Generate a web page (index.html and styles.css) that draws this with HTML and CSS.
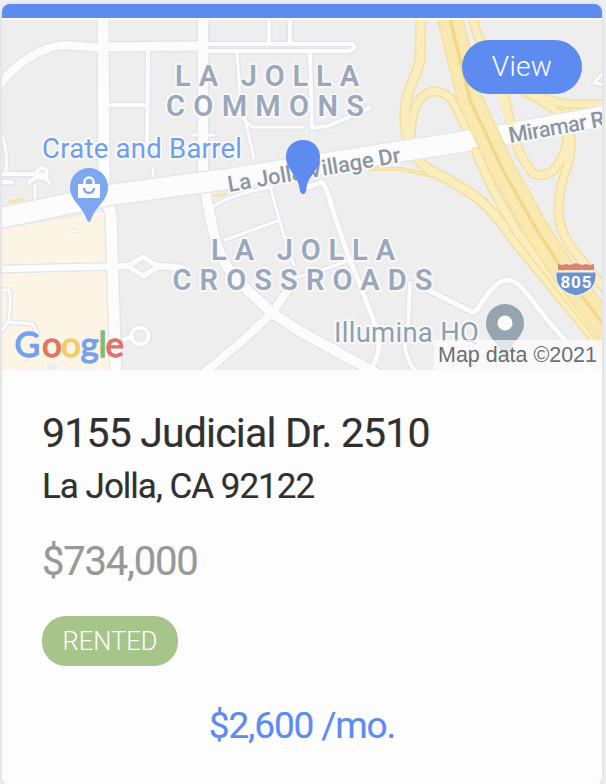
FILE: index.html
```html
<!DOCTYPE html>
<html lang="en">
<head>
<meta charset="utf-8">
<title>9155 Judicial Dr. 2510</title>
<link rel="stylesheet" href="styles.css">
</head>
<body>
<article class="card">
  <div class="map">
    <svg class="map-image" viewBox="2 20 600 350">
      <defs>
        <g id="streets">
          <path class="road w8" d="M0 84C14 66 40 46 65 45L102 48"/>
          <path class="road w9" d="M102 47L200 46"/>
          <path class="road w4" d="M200 44L353 44M200 51L350 51L355 47"/>
          <path class="road w11" d="M103 10L104 190L111 215L116 380"/>
          <path class="road w10" d="M203 10L203 180L214 235Q220 262 240 283L272 313L303 333L385 378"/>
          <path class="road w8" d="M200 376L240 343L272 313L288 290"/>
          <path class="road w4" d="M148 52L147 150M108 105L146 105M269 10V42M290 10V42"/>
          <path class="road w3" d="M237 52L240 96L247 128L254 158M243 118L252 127L303 127M153 168V188"/>
          <path class="road w4" d="M310 52L312 128L328 126L370 108"/>
          <path class="road w3" d="M192 135H214M213 207Q228 195 272 187M271 190L285 240L294 265M225 240L277 221M294 278L322 270L350 260"/>
          <path class="road w5" d="M305 188L322 182Q328 190 332 208L348 255L362 290L378 332Q382 348 373 366"/>
          <path class="road w4" d="M410 283L408 325L405 343Q404 357 417 373"/>
          <path class="road w5" d="M428 290L472 312Q476 313 480 305C490 290 498 280 508 280C520 281 530 298 545 317L592 372"/>
          <path class="road w7" d="M0 269L128 266M158 266L182 268"/>
          <path class="road w5" d="M128 266L143 257L158 267L143 276ZM125 339L131 337"/>
          <circle class="road w4" cx="140" cy="336" r="8.500"/>
          <path class="road w4" d="M0 174H35M0 182H12M29 182L42 174L49 182"/>
          <circle class="road w4" cx="42" cy="173" r="5"/>
          <path class="road w3" d="M2 135Q8 150 6 170M2 290H9Q12 302 8 322L33 324L38 335M35 185V200M8 322L2 330"/>
          <path class="road w3" d="M604 72L594 83L604 85"/>
        </g>
        <g id="arterial">
          <path class="road w20" d="M0 218L110 195L220 180L300 167L480 139L604 116"/>
        </g>
        <g id="ramps">
          <path class="road w9" d="M421 10L420 60Q418 70 410 88Q404 104 405 118Q406 145 418 159Q424 168 437 174Q462 186 480 200Q496 214 516 243L590 333L610 358"/>
          <path class="road w2" d="M370 169L400 169L435 176"/>
          <path class="road w8" d="M411 145Q410 111 420 99Q434 84 450 98Q460 111 468 135"/>
          <path class="road w8" d="M472 10Q474 35 486 48L500 76L512 130Q518 155 532 172Q540 179 553 171Q564 158 567 143Q568 115 545 103L522 90"/>
          <path class="road w8" d="M515 82Q545 103 570 104L608 104"/>
          <path class="road w8" d="M566 112Q576 145 565 173Q557 195 559 218Q562 239 580 258L608 293"/>
        </g>
        <g id="collector">
          <path class="road w8" d="M476 152L492 188L517 232L606 346"/>
        </g>
        <g id="freeway">
          <path class="road w24" d="M448 10L470 100L503 170L535 227L564 272L612 336"/>
        </g>
      </defs>

      <g class="terrain">
        <rect class="land" x="2" y="20" width="600" height="350"/>
        <path class="district" d="M2 229L104 212L111 370H2Z"/>
        <use href="#streets" class="street-edge"/>
        <use href="#streets" class="street"/>
        <path class="land" d="M47 363h10v7H47z"/>
        <ellipse class="pond" cx="74" cy="231" rx="4" ry="2"/>
        <use href="#ramps" class="highway-edge"/>
        <use href="#ramps" class="highway"/>
        <use href="#arterial" class="street-edge"/>
        <use href="#arterial" class="street"/>
        <path class="highway road w8 crossing" d="M496 75L512 130Q518 155 532 172"/>
        <path class="accent" d="M214 196L227 194M9 202L24 199"/>
        <use href="#collector" class="highway-edge"/>
        <use href="#collector" class="highway"/>
        <use href="#freeway" class="highway-edge"/>
        <use href="#freeway" class="freeway"/>
        <path class="median" d="M448 10L470 100L503 170L535 227L564 272L612 336"/>
      </g>

      <g class="area">
        <text x="175" y="86" textLength="184">LA JOLLA</text>
        <text x="166" y="116" textLength="198">COMMONS</text>
        <text x="211" y="260" textLength="184">LA JOLLA</text>
        <text x="172.500" y="290" textLength="260">CROSSROADS</text>
      </g>
      <text class="place shop" x="42" y="158" textLength="200">Crate and Barrel</text>
      <text class="place office" x="334" y="342" textLength="145">Illumina HQ</text>
      <g class="street-name">
        <text transform="translate(229 192) rotate(-9.800)" textLength="175">La Jolla Village Dr</text>
        <text transform="translate(510 143) rotate(-10)" textLength="109">Miramar Rd</text>
      </g>

      <path class="pin-shop" d="M89 168a19 19 0 0 1 19 19c0 14-12 18-17 33q-2 4-4 0c-5-15-17-19-17-33a19 19 0 0 1 19-19Z"/>
      <path class="bag" d="M78 184h22v14H78Z"/>
      <path class="handle" d="M84.500 186v-4a4.500 4.500 0 0 1 9 0v4"/>
      <path class="smile" d="M84 188a5 5 0 0 0 10 0"/>
      <path class="pin-office" d="M505 304a19 19 0 0 1 19 19c0 14-12 18-17 33q-2 4-4 0c-5-15-17-19-17-33a19 19 0 0 1 19-19Z"/>
      <circle class="pin-hole" cx="505" cy="323" r="7.500"/>

      <path class="shield-top" d="M558 270V264l4 1 4-1 4 1 6-2 6 2 4-1 4 1 4-1v6Z"/>
      <path class="shield" d="M556 272h40c1 13-5 20-20 24c-15-4-21-11-20-24Z"/>
      <text class="shield-text" x="576" y="288" textLength="31">805</text>

      <text class="logo" y="356.500"><tspan class="blue" x="14.500">G</tspan><tspan class="red" x="42">o</tspan><tspan class="yellow" x="61">o</tspan><tspan class="blue" x="80.500">g</tspan><tspan class="green" x="98.500">l</tspan><tspan class="red" x="105.500">e</tspan></text>

      <rect class="credit-box" x="434" y="340" width="168" height="30"/>
      <text class="credit" x="438" y="361.500" textLength="159" lengthAdjust="spacingAndGlyphs">Map data ©2021</text>
      <path class="pin-main" d="M303 140c10 0 17 7 17 17c0 13-12 18-13.500 31q-.5 6-3.500 6t-3.500-6c-1.500-13-13.500-18-13.500-31c0-10 7-17 17-17Z"/>
    </svg>
    <a class="view" href="#">View</a>
  </div>
  <div class="details">
    <h2 class="title">9155 Judicial Dr. 2510</h2>
    <p class="city">La Jolla, CA 92122</p>
    <p class="price">$734,000</p>
    <span class="status">RENTED</span>
    <p class="rent">$2,600 /mo.</p>
  </div>
</article>
</body>
</html>
```
FILE: styles.css
```css
* { box-sizing: border-box; }

body {
  margin: 0;
  height: 784px;
  padding: 4px 4px 0 2px;
  overflow: hidden;
  background: #eeeef3;
  font-family: Roboto, sans-serif;
}

.card {
  height: 781px;
  border-top: 14px solid #5d8bf0;
  border-radius: 8px;
  padding-top: 2px;
  background: #fdfdfd;
  box-shadow: 0 0 5px rgba(60, 60, 90, .13);
  overflow: hidden;
}

.map { position: relative; height: 350px; }
.map-image { display: block; width: 600px; height: 350px; }

.view {
  position: absolute;
  top: 20px;
  right: 20px;
  width: 120px;
  height: 54px;
  border-radius: 27px;
  background: #5d8bf0;
  color: #fff;
  font-size: 28px;
  font-weight: 300;
  line-height: 53px;
  letter-spacing: .3px;
  text-align: center;
  text-decoration: none;
}

.details {
  display: flex;
  flex-direction: column;
  align-items: flex-start;
  padding: 39px 40px 0;
}

.title, .city, .price, .rent {
  margin: 0;
  font-weight: 400;
  white-space: nowrap;
  -webkit-text-stroke: .2px currentColor;
}
.title { font-size: 41px; line-height: 48px; letter-spacing: -.83px; color: #303030; }
.city { margin-top: 9px; font-size: 35px; line-height: 42px; letter-spacing: -1px; color: #303030; }
.price { margin-top: 30px; font-size: 40px; line-height: 48px; letter-spacing: -1.2px; color: #989898; }

.status {
  width: 136px;
  height: 50px;
  margin-top: 30px;
  border-radius: 24px;
  background: #a6c58a;
  color: #fff;
  font-size: 25.5px;
  font-weight: 300;
  line-height: 50px;
  text-align: center;
}

.rent {
  align-self: center;
  margin-top: 38px;
  font-size: 37px;
  line-height: 44px;
  letter-spacing: -1.15px;
  color: #5d8bf0;
}

/* Map */
.terrain { filter: blur(.5px); }
.land { fill: #eee; }
.district { fill: #fcf5e6; }
.pond { fill: #fcfcfd; stroke: #e4e4ea; }

.road {
  fill: none;
  stroke-linejoin: round;
  stroke-linecap: round;
  stroke-width: calc(var(--w) + var(--edge));
}
.w2 { --w: 2px; }
.w3 { --w: 3px; }
.w4 { --w: 4px; }
.w5 { --w: 5px; }
.w7 { --w: 6.5px; }
.w8 { --w: 8px; }
.w9 { --w: 9px; }
.w10 { --w: 10px; }
.w11 { --w: 11px; }
.w20 { --w: 20px; }
.w24 { --w: 24px; }

.street-edge { --edge: 2.5px; stroke: #e3e4ea; }
.street { --edge: 0px; stroke: #fcfcfd; }
.highway-edge { --edge: 2px; stroke: #f3df9c; }
.highway { --edge: -1px; stroke: #fbedbd; }
.freeway { --edge: -1px; stroke: #f9e8b0; }
.median { fill: none; stroke: #f2d88c; stroke-width: 3.5px; }
.accent { fill: none; stroke: #f8e3a5; stroke-width: 3px; }

.map-image text {
  paint-order: stroke;
  stroke: rgba(250, 250, 252, .9);
  stroke-width: 4px;
  stroke-linejoin: round;
}
.area { font-size: 29px; font-weight: 600; fill: #9ba7bb; }
.place { font-size: 27.5px; }
.shop { fill: #6e9fef; }
.office { fill: #8f9fac; }
.street-name { font-size: 22px; font-weight: 500; fill: #8d969e; }

.pin-shop { fill: #7ea7f1; }
.bag { fill: #fcfcfd; }
.handle { fill: none; stroke: #fcfcfd; stroke-width: 2.5px; }
.smile { fill: none; stroke: #7ea7f1; stroke-width: 2.5px; }
.pin-office { fill: #95a5b0; }
.pin-hole { fill: #fcfcfd; }
.pin-main { fill: #5d8bf0; }

.shield-top { fill: #da837e; }
.shield { fill: #6b93cf; stroke: #fafafa; stroke-width: 1px; }
.map-image .shield-text { font-size: 17px; font-weight: 700; fill: #fff; stroke: none; text-anchor: middle; }

.map-image .logo { font-family: Lato, sans-serif; font-size: 35px; font-weight: 400; }
.map-image tspan { stroke-width: 1.3px; }
.blue { fill: #76a1f1; stroke: #76a1f1; }
.red { fill: #df7469; stroke: #df7469; }
.yellow { fill: #f5cb64; stroke: #f5cb64; }
.green { fill: #7dba83; stroke: #7dba83; }

.credit-box { fill: rgba(253, 253, 253, .72); }
.map-image .credit { font-family: "Liberation Sans", sans-serif; font-size: 22.5px; fill: #6e6e6e; stroke: none; }
```
